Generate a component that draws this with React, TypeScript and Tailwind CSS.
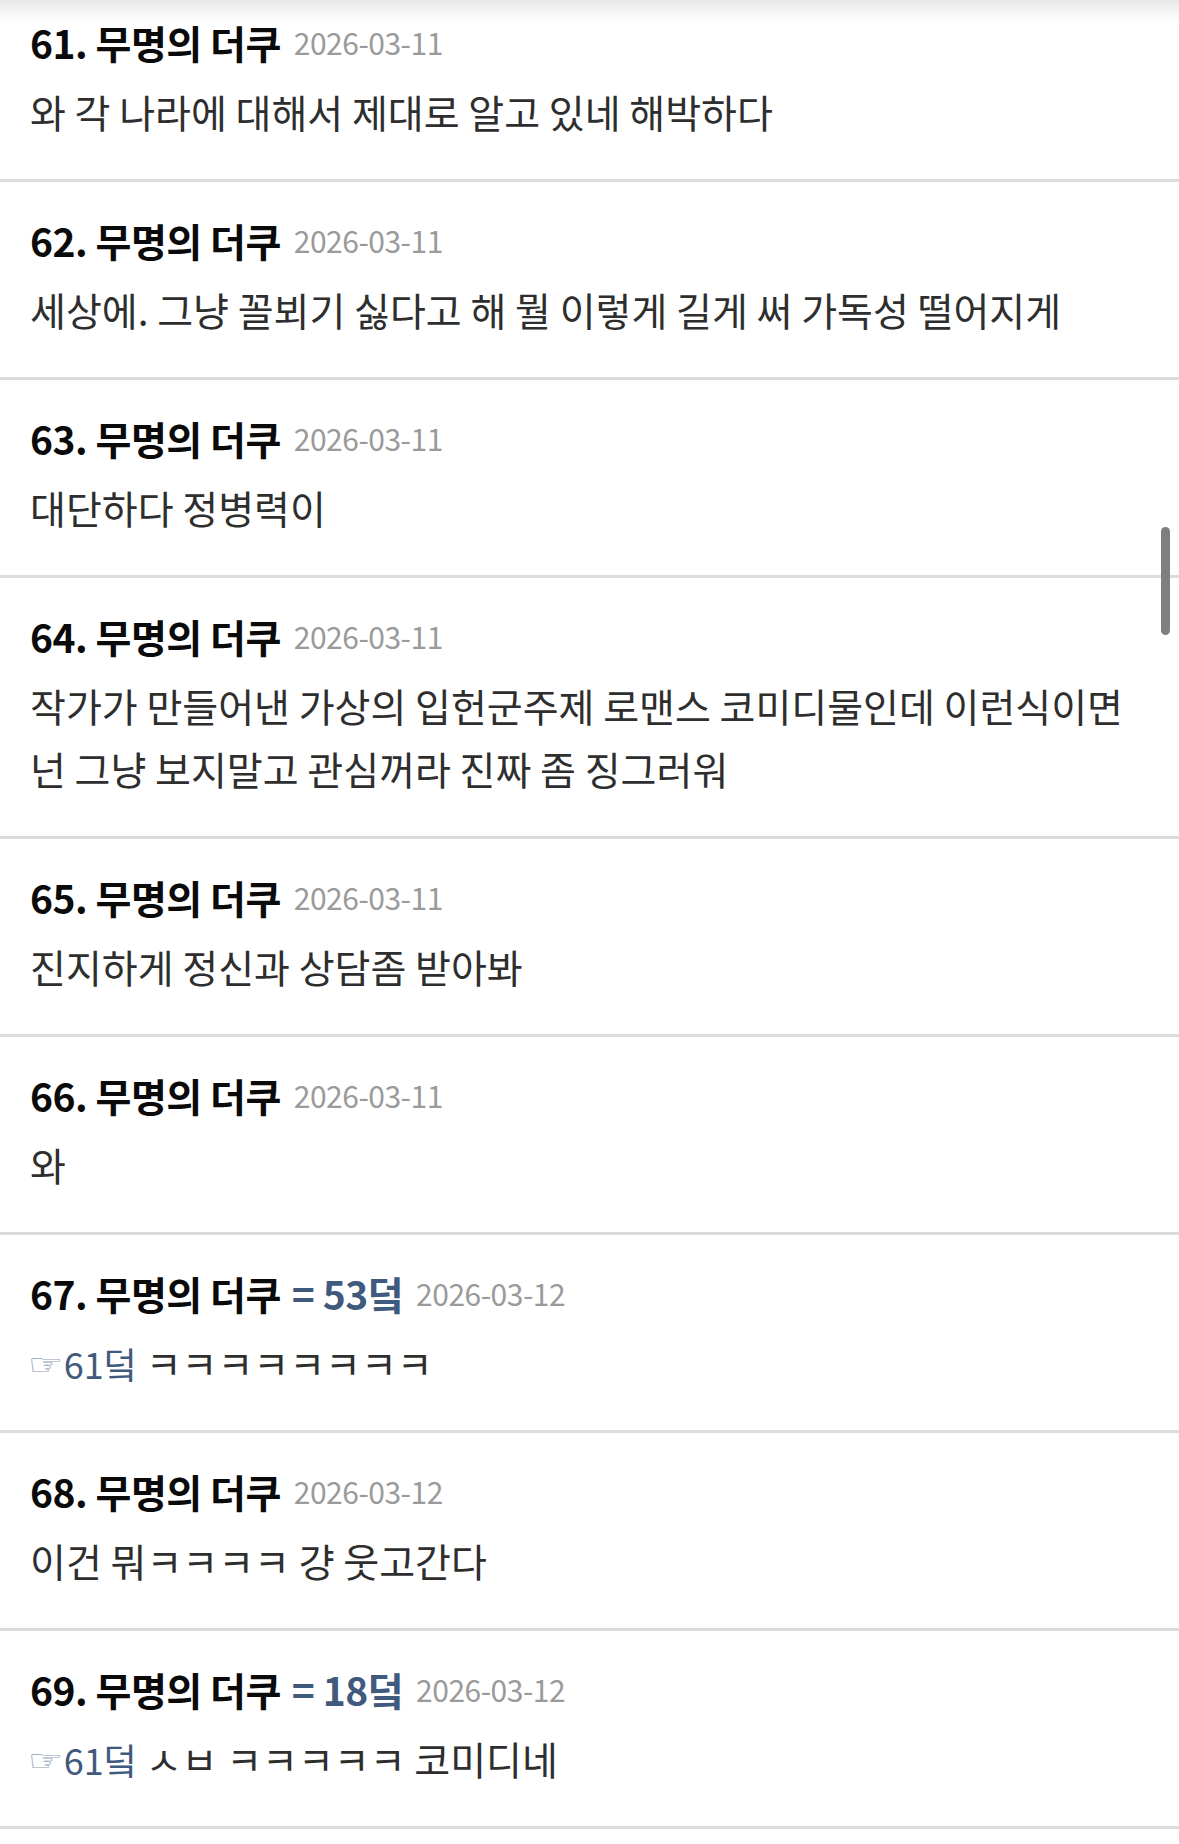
import React from "react";

type Row = {
  n: number;
  date: string;
  ref?: string;
  reply?: string;
  body: string;
};

const rows: Row[] = [
  { n: 61, date: "2026-03-11", body: "와 각 나라에 대해서 제대로 알고 있네 해박하다" },
  { n: 62, date: "2026-03-11", body: "세상에. 그냥 꼴뵈기 싫다고 해 뭘 이렇게 길게 써 가독성 떨어지게" },
  { n: 63, date: "2026-03-11", body: "대단하다 정병력이" },
  {
    n: 64,
    date: "2026-03-11",
    body: "작가가 만들어낸 가상의 입헌군주제 로맨스 코미디물인데 이런식이면 넌 그냥 보지말고 관심꺼라 진짜 좀 징그러워",
  },
  { n: 65, date: "2026-03-11", body: "진지하게 정신과 상담좀 받아봐" },
  { n: 66, date: "2026-03-11", body: "와" },
  { n: 67, date: "2026-03-12", ref: "53덬", reply: "61덬", body: "ㅋㅋㅋㅋㅋㅋㅋㅋ" },
  { n: 68, date: "2026-03-12", body: "이건 뭐ㅋㅋㅋㅋ 걍 웃고간다" },
  { n: 69, date: "2026-03-12", ref: "18덬", reply: "61덬", body: "ㅅㅂ ㅋㅋㅋㅋㅋ 코미디네" },
];

const font = { fontFamily: '"Noto Sans CJK KR", "Noto Sans", sans-serif' };

function Comment({ row, first }: { row: Row; first: boolean }) {
  return (
    <div
      className={`flex flex-col gap-[13px] border-b-[3px] border-[#dcdcdc] pl-[30px] pr-[30px] pb-[36px] ${
        first ? "pt-[17px]" : "pt-[33px]"
      }`}
    >
      <div className="flex items-center gap-[12px] h-[50px] whitespace-nowrap">
        <span className="text-[39px] leading-[50px] font-bold text-[#0a0a0a] tracking-[-0.5px]">
          {row.n}. 무명의 더쿠
        </span>
        {row.ref && (
          <span className="-ml-[1px] text-[39px] leading-[50px] font-bold text-[#3f5a7d] tracking-[-0.5px]">
            = {row.ref}
          </span>
        )}
        <span className="ml-[1px] text-[30px] leading-[50px] text-[#9a9a9a] tracking-[-0.5px]">
          {row.date}
        </span>
      </div>
      <div className="text-[39px] leading-[63px] text-[#2e2e2e]">
        {row.reply && (
          <span className="leading-none text-[#3f5a7d]">
            <span
              className="inline-block -ml-[2px] leading-none text-[40px] text-[#8fa0bb] align-[1px] scale-y-75"
              style={{ fontFamily: '"DejaVu Sans", sans-serif' }}
            >
              ☞
            </span>
            <span className="leading-none text-[36px]">{row.reply}</span>{" "}
          </span>
        )}
        {row.body}
      </div>
    </div>
  );
}

export default function App() {
  return (
    <div className="relative w-[1179px] min-h-[1844px] bg-white overflow-hidden" style={font}>
      <div className="absolute top-0 left-0 right-0 h-[22px] bg-gradient-to-b from-[#e9e9e9] to-transparent pointer-events-none" />
      <div className="flex flex-col">
        {rows.map((r, i) => (
          <Comment key={r.n} row={r} first={i === 0} />
        ))}
      </div>
      <div className="absolute left-[1161px] top-[527px] w-[9px] h-[108px] rounded-full bg-[#7f7f7f]" />
    </div>
  );
}
